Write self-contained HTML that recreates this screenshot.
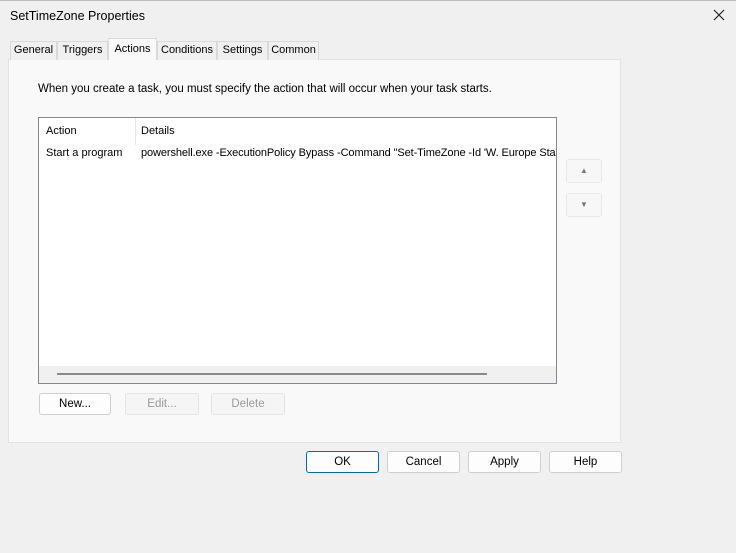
<!DOCTYPE html>
<html><head><style>
*{box-sizing:border-box;margin:0;padding:0}
body{width:736px;height:553px;background:#f0f0f0;font-family:"Liberation Sans",sans-serif;font-size:12px;color:#000;position:relative;overflow:hidden}
.a{position:absolute}
.title{left:10px;top:9px;font-size:12.5px}
.tab{position:absolute;top:41px;height:19px;border:1px solid #d9d9d9;border-bottom:none;background:#f0f0f0;text-align:center;line-height:17px;font-size:11px}
.page{left:8px;top:59px;width:613px;height:384px;background:#f9f9f9;border:1px solid #e3e3e3}
.btn{position:absolute;height:22px;border:1px solid #cfcfcf;border-radius:3px;background:#fdfdfd;text-align:center;line-height:20px;font-size:11.5px}
.dis{color:#9a9a9a;background:#f5f5f5;border-color:#e4e4e4}
</style></head><body>
<div class="a" style="left:0;top:0;width:736px;height:1px;background:#bdbdbd"></div>
<div class="a title">SetTimeZone Properties</div>
<svg class="a" style="left:713px;top:9px" width="12" height="12" viewBox="0 0 12 12"><path d="M1 1L11 11M11 1L1 11" stroke="#222" stroke-width="1.2"/></svg>
<div class="a page"></div>
<div class="tab" style="left:10px;width:47px">General</div>
<div class="tab" style="left:57px;width:51px">Triggers</div>
<div class="tab" style="left:108px;top:38px;height:22px;width:49px;background:#f9f9f9;line-height:20px;z-index:2">Actions</div>
<div class="tab" style="left:157px;width:60px">Conditions</div>
<div class="tab" style="left:217px;width:51px">Settings</div>
<div class="tab" style="left:268px;width:51px">Common</div>
<div class="a" style="left:38px;top:83px;font-size:11.5px">When you create a task, you must specify the action that will occur when your task starts.</div>
<div class="a" style="left:38px;top:117px;width:519px;height:267px;background:#fff;border:1px solid #828790;overflow:hidden">
 <div class="a" style="left:96px;top:0;width:1px;height:27px;background:#e5e5e5"></div>
 <div class="a" style="left:7px;top:7px;font-size:11px">Action</div>
 <div class="a" style="left:102px;top:7px;font-size:11px">Details</div>
 <div class="a" style="left:7px;top:29px;font-size:11px;white-space:nowrap">Start a program</div>
 <div class="a" style="left:102px;top:29px;font-size:11px;white-space:nowrap;letter-spacing:-0.1px">powershell.exe -ExecutionPolicy Bypass -Command "Set-TimeZone -Id 'W. Europe Standard Time'"</div>
 <div class="a" style="left:0;top:248px;width:518px;height:18px;background:#f0f0f0"></div>
 <div class="a" style="left:18px;top:255px;width:430px;height:2px;background:#8a8a8a"></div>
</div>
<div class="btn" style="left:566px;top:159px;width:36px;height:24px;border-color:#e8e8e8;background:#f7f7f7;color:#777;font-size:8px;line-height:22px">▲</div>
<div class="btn" style="left:566px;top:193px;width:36px;height:24px;border-color:#e8e8e8;background:#f7f7f7;color:#777;font-size:8px;line-height:22px">▼</div>
<div class="btn" style="left:39px;top:393px;width:72px">New...</div>
<div class="btn dis" style="left:125px;top:393px;width:74px">Edit...</div>
<div class="btn dis" style="left:211px;top:393px;width:74px">Delete</div>
<div class="btn" style="left:306px;top:451px;width:73px;border-color:#0067c0">OK</div>
<div class="btn" style="left:387px;top:451px;width:73px">Cancel</div>
<div class="btn" style="left:468px;top:451px;width:73px">Apply</div>
<div class="btn" style="left:549px;top:451px;width:73px">Help</div>
</body></html>
